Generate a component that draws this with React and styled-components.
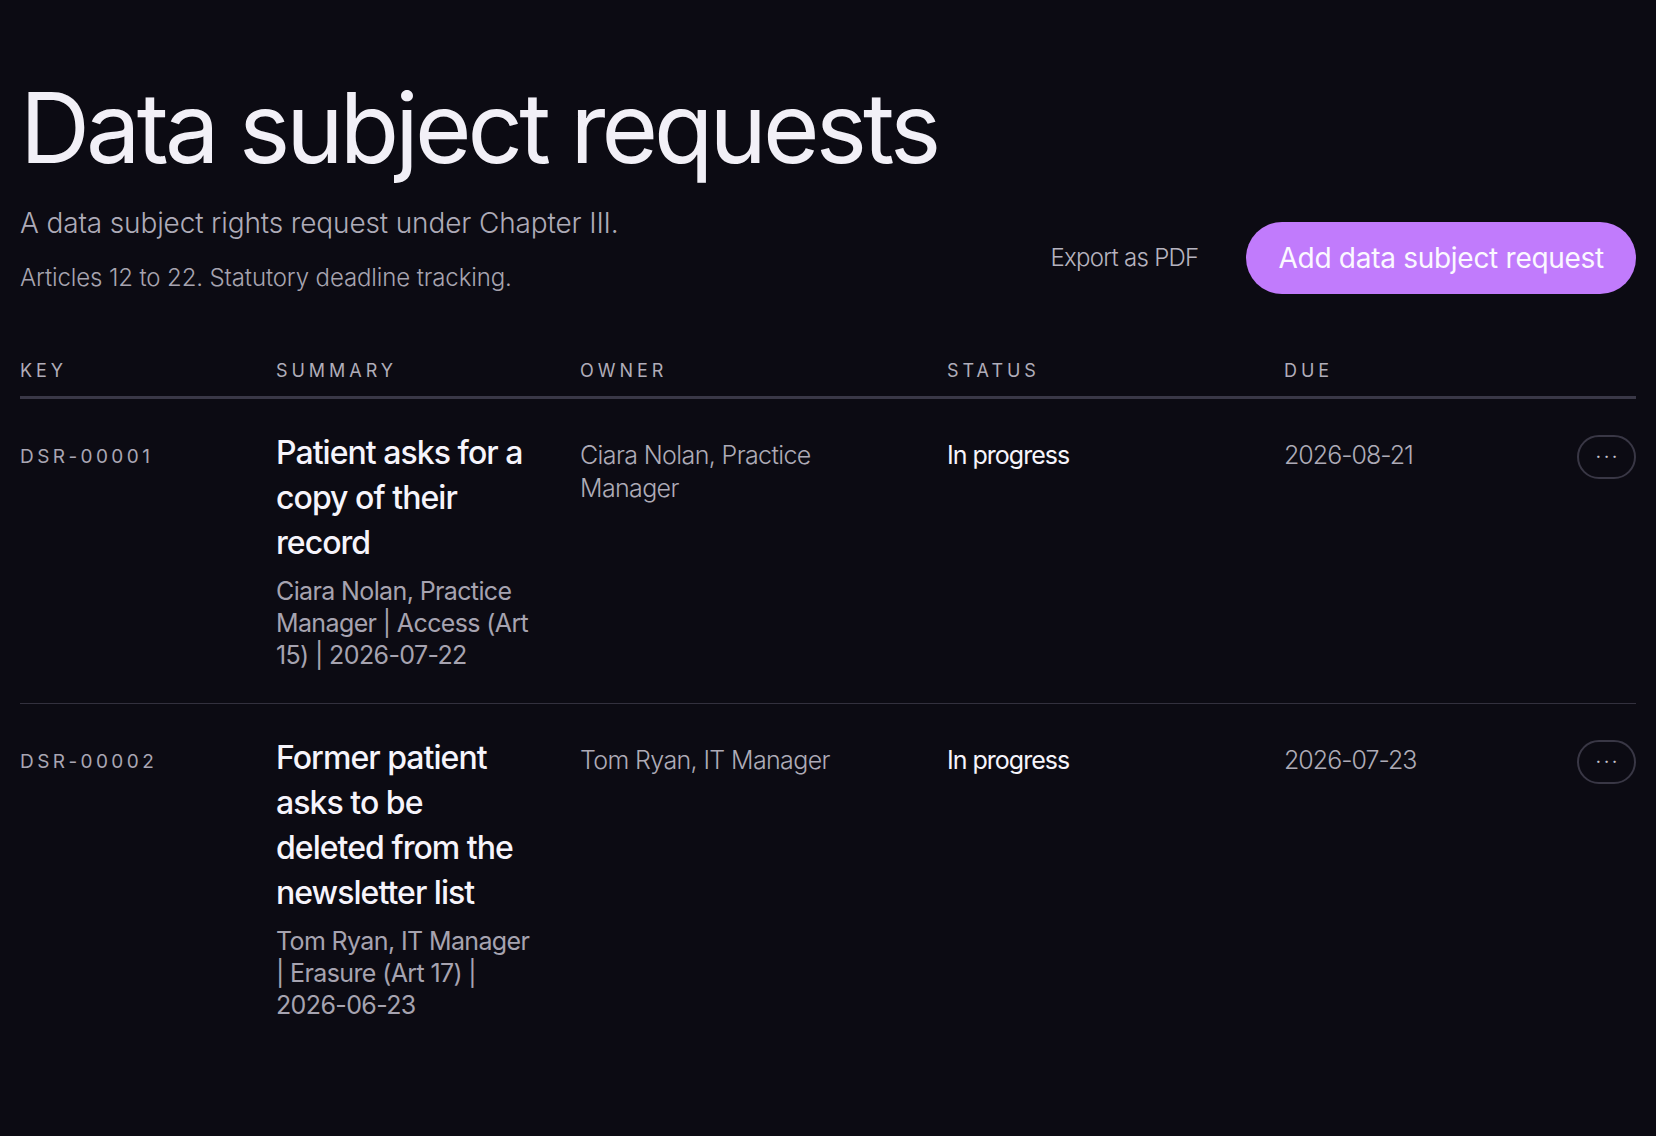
import React from 'react';
import styled, { createGlobalStyle } from 'styled-components';

const GlobalStyle = createGlobalStyle`
  html, body {
    margin: 0;
    padding: 0;
    background: #0c0b13;
  }
  body {
    font-family: Inter, "Noto Sans", sans-serif;
    color: #f2f0f7;
    -webkit-font-smoothing: antialiased;
  }
`;

const requests = [
  {
    key: 'DSR-00001',
    title: 'Patient asks for a copy of their record',
    meta: 'Ciara Nolan, Practice Manager | Access (Art 15) | 2026-07-22',
    owner: 'Ciara Nolan, Practice Manager',
    status: 'In progress',
    due: '2026-08-21',
  },
  {
    key: 'DSR-00002',
    title: 'Former patient asks to be deleted from the newsletter list',
    meta: 'Tom Ryan, IT Manager | Erasure (Art 17) | 2026-06-23',
    owner: 'Tom Ryan, IT Manager',
    status: 'In progress',
    due: '2026-07-23',
  },
];

function App() {
  return (
    <Page>
      <GlobalStyle />
      <Title>Data subject requests</Title>
      <Intro>
        <div>
          <Lead>A data subject rights request under Chapter III.</Lead>
          <Note>Articles 12 to 22. Statutory deadline tracking.</Note>
        </div>
        <Actions>
          <LinkButton>Export as PDF</LinkButton>
          <PrimaryButton>Add data subject request</PrimaryButton>
        </Actions>
      </Intro>

      <Table>
        <HeadRow>
          <HeadCell>Key</HeadCell>
          <HeadCell>Summary</HeadCell>
          <HeadCell>Owner</HeadCell>
          <HeadCell>Status</HeadCell>
          <HeadCell>Due</HeadCell>
          <HeadCell />
        </HeadRow>
        {requests.map((r, i) => (
          <Row key={r.key} $last={i === requests.length - 1}>
            <KeyCell>{r.key}</KeyCell>
            <SummaryCell>
              <SummaryTitle>{r.title}</SummaryTitle>
              <SummaryMeta>{r.meta}</SummaryMeta>
            </SummaryCell>
            <OwnerCell>{r.owner}</OwnerCell>
            <StatusCell>{r.status}</StatusCell>
            <DueCell>{r.due}</DueCell>
            <MoreButton aria-label="More">···</MoreButton>
          </Row>
        ))}
      </Table>
    </Page>
  );
}

const Page = styled.div`
  min-height: 1136px;
  box-sizing: border-box;
  padding: 75px 20px 40px;
  background: #0c0b13;
`;

const Title = styled.h1`
  margin: 0;
  font-size: 97px;
  font-weight: 400;
  line-height: 1.1;
  letter-spacing: -0.04em;
  color: #f2f0f7;
`;

const Intro = styled.div`
  display: flex;
  justify-content: space-between;
  align-items: flex-end;
  margin-top: 23px;
`;

const Lead = styled.p`
  margin: 0;
  font-size: 28px;
  font-weight: 300;
  letter-spacing: -0.005em;
  line-height: 36px;
  color: #aeabb8;
`;

const Note = styled.p`
  margin: 21px 0 0;
  font-size: 24px;
  font-weight: 300;
  letter-spacing: -0.005em;
  line-height: 32px;
  color: #a7a4b0;
`;

const Actions = styled.div`
  display: flex;
  align-items: center;
  gap: 48px;
`;

const LinkButton = styled.button`
  border: none;
  background: none;
  padding: 0;
  font-family: inherit;
  font-size: 24px;
  font-weight: 300;
  letter-spacing: -0.03em;
  color: #b6b3bf;
  cursor: pointer;
`;

const PrimaryButton = styled.button`
  height: 72px;
  padding: 0 32px;
  border: none;
  border-radius: 36px;
  background: #c17bfc;
  font-family: inherit;
  font-size: 28px;
  font-weight: 400;
  letter-spacing: -0.01em;
  color: #fbf8ff;
  cursor: pointer;
`;

const Table = styled.div`
  margin-top: 65px;
`;

const grid = `
  display: grid;
  grid-template-columns: 256px 304px 367px 337px 1fr 59px;
`;

const HeadRow = styled.div`
  ${grid}
  padding-bottom: 13px;
  border-bottom: 3px solid #3a3847;
`;

const HeadCell = styled.div`
  font-size: 18px;
  font-weight: 400;
  letter-spacing: 0.22em;
  text-transform: uppercase;
  line-height: 24px;
  color: #b0adb9;
`;

const Row = styled.div`
  ${grid}
  align-items: start;
  padding: 31px 0 32px;
  border-bottom: ${(p) => (p.$last ? 'none' : '1px solid #33313e')};
`;

const KeyCell = styled.div`
  padding-top: 15px;
  font-size: 19px;
  letter-spacing: 0.18em;
  line-height: 24px;
  color: #a9a6b3;
`;

const SummaryCell = styled.div`
  padding-right: 48px;
`;

const SummaryTitle = styled.div`
  font-size: 32px;
  font-weight: 500;
  letter-spacing: -0.03em;
  line-height: 45px;
  color: #f6f4fb;
`;

const SummaryMeta = styled.div`
  margin-top: 10px;
  font-size: 25px;
  font-weight: 400;
  letter-spacing: -0.025em;
  line-height: 32px;
  color: #a6a3b0;
`;

const OwnerCell = styled.div`
  padding: 9px 70px 0 0;
  font-size: 25px;
  font-weight: 300;
  letter-spacing: -0.025em;
  line-height: 33px;
  color: #aeabb7;
`;

const StatusCell = styled.div`
  padding-top: 9px;
  font-size: 25px;
  font-weight: 400;
  letter-spacing: -0.04em;
  line-height: 33px;
  color: #f6f4fb;
`;

const DueCell = styled(StatusCell)`
  font-weight: 300;
  color: #aeabb7;
`;

const MoreButton = styled.button`
  width: 59px;
  height: 44px;
  margin-top: 5px;
  padding: 0 0 0 3px;
  border: 2px solid #393745;
  border-radius: 22px;
  background: transparent;
  font-family: inherit;
  font-size: 18px;
  letter-spacing: 3px;
  line-height: 1;
  color: #c8c5d0;
  cursor: pointer;
`;

export default App;
